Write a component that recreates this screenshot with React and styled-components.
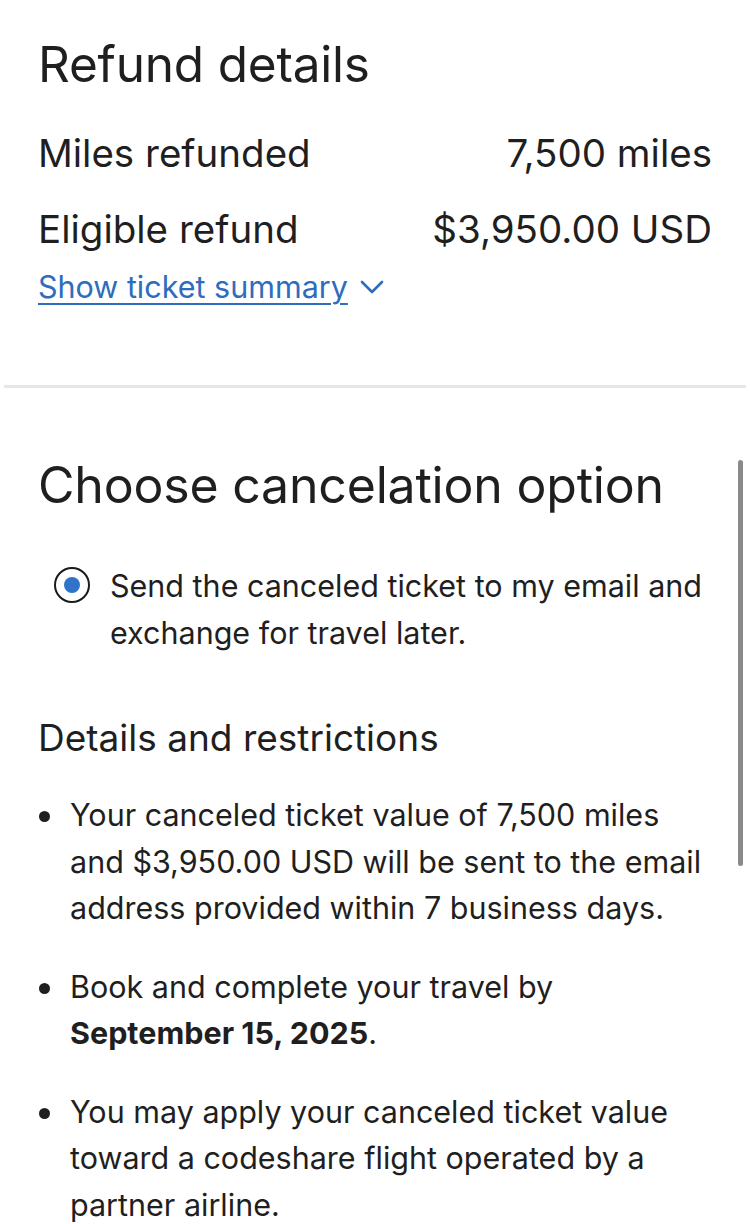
import React from "react";
import styled, { createGlobalStyle } from "styled-components";

const GlobalStyle = createGlobalStyle`
  html, body {
    margin: 0;
    padding: 0;
    background: #ffffff;
  }
  body {
    font-family: "Inter", "Liberation Sans", sans-serif;
    color: #1f1f1f;
    -webkit-font-smoothing: antialiased;
  }
`;

const Page = styled.div`
  position: relative;
  width: 750px;
  min-height: 1224px;
  overflow: hidden;
`;

const Section = styled.section`
  display: flex;
  flex-direction: column;
  padding: ${(p) => p.$pad};
`;

const Title = styled.h1`
  margin: 0;
  font-size: ${(p) => p.$size}px;
  line-height: ${(p) => p.$lh}px;
  font-weight: 400;
  letter-spacing: -0.2px;
`;

const Rows = styled.div`
  display: flex;
  flex-direction: column;
  margin-top: 23px;
`;

const Row = styled.div`
  display: flex;
  justify-content: space-between;
  align-items: baseline;
  font-size: 38.5px;
  line-height: 76px;
`;

const LinkRow = styled.a`
  display: flex;
  align-items: center;
  gap: 12px;
  font-size: 30.5px;
  line-height: 40px;
  color: #2e6dbd;
  cursor: pointer;
`;

const LinkText = styled.span`
  text-decoration: underline;
  text-decoration-thickness: 2px;
  text-underline-offset: 5px;
`;

const Divider = styled.hr`
  margin: 0 4px;
  border: none;
  height: 3px;
  background: #e6e6e6;
`;

const Option = styled.label`
  display: flex;
  align-items: flex-start;
  gap: 20px;
  margin-top: 47px;
  padding-left: 16px;
  font-size: 30.5px;
  line-height: 47px;
`;

const Radio = styled.span`
  flex: none;
  box-sizing: border-box;
  width: 36px;
  height: 36px;
  margin-top: 5px;
  border-radius: 50%;
  border: 2.5px solid #1a1a1a;
  display: flex;
  align-items: center;
  justify-content: center;

  &::after {
    content: "";
    width: 16px;
    height: 16px;
    border-radius: 50%;
    background: #2f74c8;
  }
`;

const SubTitle = styled.h2`
  margin: 60px 0 0;
  font-size: 37px;
  line-height: 44px;
  font-weight: 400;
`;

const List = styled.ul`
  list-style: none;
  margin: 32px 0 0;
  padding: 0;
  display: flex;
  flex-direction: column;
  gap: 32px;
`;

const Item = styled.li`
  position: relative;
  padding-left: 32px;
  font-size: 30.5px;
  line-height: 46.5px;

  &::before {
    content: "";
    position: absolute;
    left: 1px;
    top: 19px;
    width: 11px;
    height: 11px;
    border-radius: 50%;
    background: #1f1f1f;
  }

  strong {
    font-weight: 700;
  }
`;

const ScrollThumb = styled.div`
  position: absolute;
  right: 7px;
  top: 460px;
  width: 5px;
  height: 406px;
  border-radius: 3px;
  background: #8a8a8a;
`;

const Chevron = () => (
  <svg width="24" height="14" viewBox="0 0 24 14" fill="none">
    <path
      d="M2 2l10 10L22 2"
      stroke="#2e6dbd"
      strokeWidth="2.6"
      strokeLinecap="round"
      strokeLinejoin="round"
    />
  </svg>
);

export default function App() {
  return (
    <Page>
      <GlobalStyle />
      <Section $pad="36px 38px 78px 38px">
        <Title $size={49.5} $lh={56}>
          Refund details
        </Title>
        <Rows>
          <Row>
            <span>Miles refunded</span>
            <span>7,500 miles</span>
          </Row>
          <Row>
            <span>Eligible refund</span>
            <span>$3,950.00 USD</span>
          </Row>
        </Rows>
        <LinkRow>
          <LinkText>Show ticket summary</LinkText>
          <Chevron />
        </LinkRow>
      </Section>
      <Divider />
      <Section $pad="67px 38px 40px 38px">
        <Title $size={50} $lh={60}>
          Choose cancelation option
        </Title>
        <Option>
          <Radio />
          <span>
            Send the canceled ticket to my email and exchange for travel
            later.
          </span>
        </Option>
        <SubTitle>Details and restrictions</SubTitle>
        <List>
          <Item>
            Your canceled ticket value of 7,500 miles and $3,950.00 USD will be
            sent to the email address provided within 7 business days.
          </Item>
          <Item>
            Book and complete your travel by <strong>September 15, 2025</strong>.
          </Item>
          <Item>
            You may apply your canceled ticket value toward a codeshare flight
            operated by a partner airline.
          </Item>
        </List>
      </Section>
      <ScrollThumb />
    </Page>
  );
}
